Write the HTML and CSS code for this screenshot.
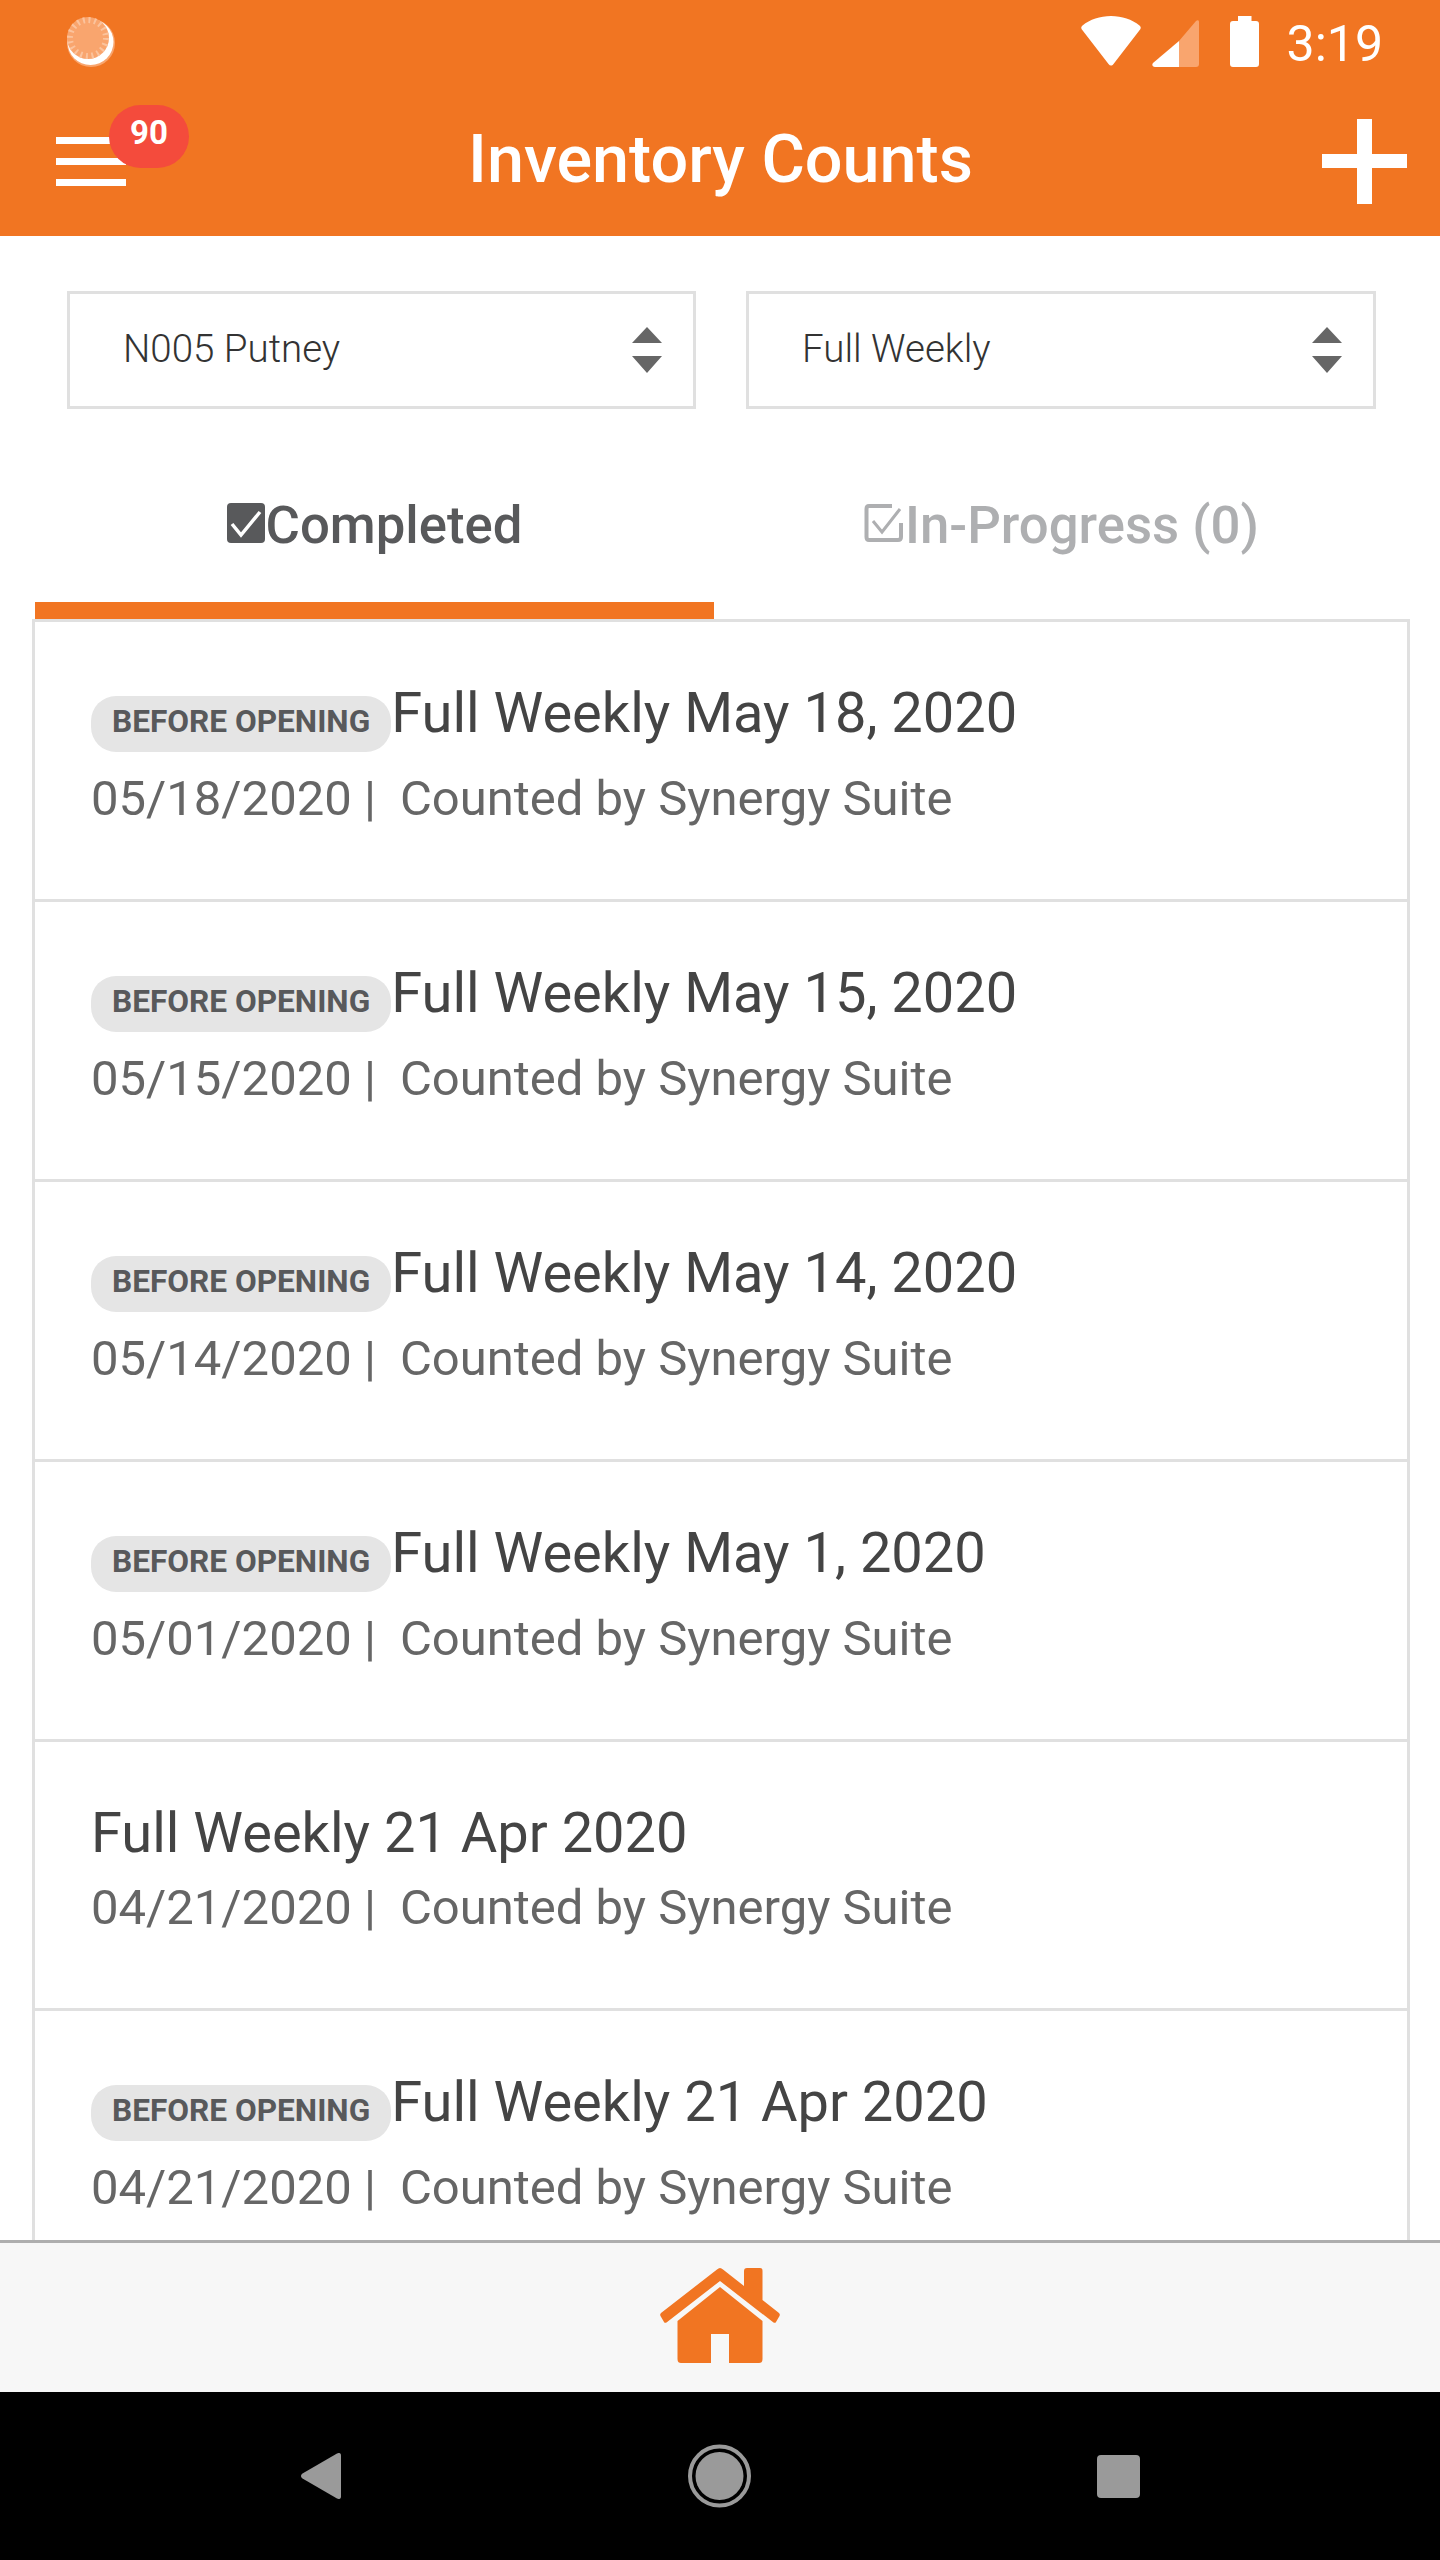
FILE: index.html
```html
<!DOCTYPE html>
<html lang="en">
<head>
<meta charset="utf-8">
<title>Inventory Counts</title>
<link rel="stylesheet" href="styles.css">
</head>
<body>
<div class="app">
  <header class="app-header">
    <div class="status-bar">
      <svg class="sync-icon" width="50" height="50" viewBox="0 0 50 50">
        <circle cx="25" cy="26" r="24" fill="#f9a56e"/>
        <circle cx="24.500" cy="25" r="23" fill="#fff"/>
        <circle cx="22" cy="21" r="21" fill="#f9a56e"/>
        <circle cx="22" cy="21" r="18" fill="none" stroke="#fbc39d" stroke-width="6" stroke-dasharray="2 3.650"/>
      </svg>
      <div class="status-right">
        <svg width="60" height="50" viewBox="0 0 60 50"><path d="M30 0C19 0 9 3.500 1.500 9.500C0 10.700 0 12 .7 13.300L27.500 48C29 50 31 50 32.500 48L59.300 13.300C60 12 60 10.700 58.500 9.500C51 3.500 41 0 30 0Z" fill="#fff"/></svg>
        <svg class="signal" width="47" height="48" viewBox="0 0 47 48"><path d="M27 22V48H3C.5 48-.5 46 1 44Z" fill="#fff"/><path d="M27 22L44 2C45.500.5 47 1 47 3V45C47 47 46 48 44 48H27Z" fill="#f9a56e"/></svg>
        <svg class="battery" width="29" height="51" viewBox="0 0 29 51"><path d="M8 0H21.500V5H26C28 5 29 6 29 8V48C29 50 28 51 26 51H3C1 51 0 50 0 48V8C0 6 1 5 3 5H8Z" fill="#fff"/></svg>
        <span class="clock">3:19</span>
      </div>
    </div>
    <div class="toolbar">
      <div class="menu">
        <span class="menu-bar"></span><span class="menu-bar"></span><span class="menu-bar"></span>
        <span class="menu-badge">90</span>
      </div>
      <h1 class="page-title">Inventory Counts</h1>
      <div class="plus"><span class="plus-h"></span><span class="plus-v"></span></div>
    </div>
  </header>

  <main class="content">
    <div class="filters">
      <div class="select">
        <span class="select-value">N005 Putney</span>
        <svg class="select-arrows" width="30" height="46" viewBox="0 0 30 46"><path d="M15 0L30 16H0Z M0 29H30L15 46Z" fill="#666"/></svg>
      </div>
      <div class="select">
        <span class="select-value">Full Weekly</span>
        <svg class="select-arrows" width="30" height="46" viewBox="0 0 30 46"><path d="M15 0L30 16H0Z M0 29H30L15 46Z" fill="#666"/></svg>
      </div>
    </div>

    <div class="tabs">
      <div class="tab tab-active"><svg class="tab-icon" width="38" height="40" viewBox="0 0 38 40"><rect width="38" height="40" rx="4" fill="#58595b"/><path d="M5 21L14 32L33 9" fill="none" stroke="#fff" stroke-width="3.500"/></svg>Completed</div>
      <div class="tab"><svg class="tab-icon" width="40" height="40" viewBox="0 0 40 40"><path d="M37 20V34C37 36 36 37 34 37H5C3.500 37 2.500 36 2.500 34V6C2.500 4 3.500 3 5 3H28" fill="none" stroke="#aeafb1" stroke-width="4"/><path d="M9 18L18 29L36 6" fill="none" stroke="#aeafb1" stroke-width="3"/></svg>In-Progress (0)</div>
    </div>

    <div class="count-list">
      <article class="count-row">
        <div class="count-title"><span class="count-badge">BEFORE OPENING</span>Full Weekly May 18, 2020</div>
        <div class="count-meta"><span>05/18/2020 |</span><span class="count-by">Counted by Synergy Suite</span></div>
      </article>
      <article class="count-row">
        <div class="count-title"><span class="count-badge">BEFORE OPENING</span>Full Weekly May 15, 2020</div>
        <div class="count-meta"><span>05/15/2020 |</span><span class="count-by">Counted by Synergy Suite</span></div>
      </article>
      <article class="count-row">
        <div class="count-title"><span class="count-badge">BEFORE OPENING</span>Full Weekly May 14, 2020</div>
        <div class="count-meta"><span>05/14/2020 |</span><span class="count-by">Counted by Synergy Suite</span></div>
      </article>
      <article class="count-row">
        <div class="count-title"><span class="count-badge">BEFORE OPENING</span>Full Weekly May 1, 2020</div>
        <div class="count-meta"><span>05/01/2020 |</span><span class="count-by">Counted by Synergy Suite</span></div>
      </article>
      <article class="count-row">
        <div class="count-title">Full Weekly 21 Apr 2020</div>
        <div class="count-meta"><span>04/21/2020 |</span><span class="count-by">Counted by Synergy Suite</span></div>
      </article>
      <article class="count-row">
        <div class="count-title"><span class="count-badge">BEFORE OPENING</span>Full Weekly 21 Apr 2020</div>
        <div class="count-meta"><span>04/21/2020 |</span><span class="count-by">Counted by Synergy Suite</span></div>
      </article>
    </div>
  </main>

  <footer class="bottom-bar">
    <svg width="120" height="95" viewBox="0 0 120 95">
      <path d="M60 0C61 0 62 .5 63 1.500L84 18V3C84 1 85 0 87 0H100C102 0 102.500 1 102.500 3V32L119 45C120 46 120 47 119.500 48L116 54C115.500 55 114.500 55 113.500 54.500L60 13L6.500 54.500C5.500 55 4.500 55 4 54L.5 48C0 47 0 46 1 45L57 1.500C58 .5 59 0 60 0Z" fill="#f17522"/>
      <path d="M60 19L102.500 53V91C102.500 94 101 95 99 95H69V66H51V95H21C19 95 17.500 94 17.500 91V53Z" fill="#f17522"/>
    </svg>
  </footer>

  <nav class="system-nav">
    <svg width="40" height="46" viewBox="0 0 40 46"><path d="M36 0.500C38.500 -.8 40 .5 40 2.500V43.500C40 45.500 38.500 46.800 36 45.500L1.500 25.500C-.5 24.200-.5 21.800 1.500 20.500Z" fill="#9a9a9a"/></svg>
    <svg width="63" height="64" viewBox="0 0 63 64"><circle cx="31.500" cy="32" r="29.500" fill="none" stroke="#9a9a9a" stroke-width="4"/><circle cx="31.500" cy="32" r="24" fill="#9a9a9a"/></svg>
    <span class="nav-square"></span>
  </nav>
</div>
</body>
</html>
```

FILE: styles.css
```css
* { box-sizing: border-box; }
html, body { margin: 0; padding: 0; }
body { font-family: Roboto, "Liberation Sans", sans-serif; background: #fff; }

.app { width: 1440px; height: 2560px; display: flex; flex-direction: column; overflow: hidden; }

.app-header { height: 236px; flex: none; background: #f17522; color: #fff; }
.status-bar { height: 84px; display: flex; justify-content: space-between; align-items: flex-start; padding: 17px 57px 0 66px; }
.status-right { display: flex; align-items: flex-start; margin-top: -1px; }
.signal { margin: 3px 0 0 11px; }
.battery { margin: 0 0 0 31px; }
.clock { font-size: 50px; line-height: 57px; margin: 0 0 0 28px; }

.toolbar { height: 152px; position: relative; display: flex; justify-content: space-between; align-items: center; padding: 0 33px 0 56px; }
.menu { width: 70px; display: flex; flex-direction: column; gap: 14px; margin-top: 3px; }
.menu-bar { display: block; height: 7px; background: #fff; }
.menu-badge { position: absolute; left: 109px; top: 21px; width: 80px; height: 63px; border-radius: 32px; background: #f44b3c; font-size: 33px; line-height: 55px; font-weight: 700; text-align: center; }
.page-title { margin: 0 7px 2px 0; font-size: 66.5px; line-height: 75px; font-weight: 500; }
.plus { width: 85px; height: 85px; position: relative; margin-top: 2px; }
.plus-h { position: absolute; left: 0; right: 0; top: 35px; height: 14px; background: #fff; }
.plus-v { position: absolute; top: 0; bottom: 0; left: 35px; width: 15px; background: #fff; }

.content { flex: 1; min-height: 0; overflow: hidden; }

.filters { display: grid; grid-template-columns: 629px 630px; column-gap: 50px; padding: 55px 0 0 67px; }
.select { height: 118px; border: 3px solid #e0e0e0; display: flex; justify-content: space-between; align-items: center; padding: 0 31px 0 53px; }
.select-value { font-size: 38.5px; font-weight: 300; color: #333; margin-top: -3px; }

.tabs { display: grid; grid-template-columns: 679px 695px; margin: 85px 0 0 35px; }
.tab { font-size: 52.7px; line-height: 62px; font-weight: 500; color: #aeafb1; text-align: center; padding-bottom: 46px; border-bottom: 17px solid transparent; }
.tab-active { color: #58595b; border-bottom-color: #f17522; }
.tab-icon { margin-right: 1px; }

.count-list { margin: 0 30px 0 32px; border: 3px solid #e0e0e0; border-bottom: 0; }
.count-row { padding: 63px 0 73px 56px; border-bottom: 3px solid #e0e0e0; }
.count-title { font-size: 56px; line-height: 56px; color: #444; }
.count-badge { display: inline-block; height: 56px; line-height: 52px; padding: 0 21px; border-radius: 25px; background: #e5e5e5; color: #58595b; font-size: 31.6px; font-weight: 700; }
.count-meta { margin-top: 20px; font-size: 49px; line-height: 54px; color: #666; }
.count-by { margin-left: 24px; }

.bottom-bar { height: 152px; flex: none; background: #f7f7f7; border-top: 3px solid #aeaeae; display: flex; justify-content: center; padding-top: 25px; }
.system-nav { height: 168px; flex: none; background: #000; display: flex; justify-content: space-between; align-items: center; padding: 0 300px 0 301px; }
.nav-square { width: 43px; height: 43px; border-radius: 4px; background: #9a9a9a; }
```
